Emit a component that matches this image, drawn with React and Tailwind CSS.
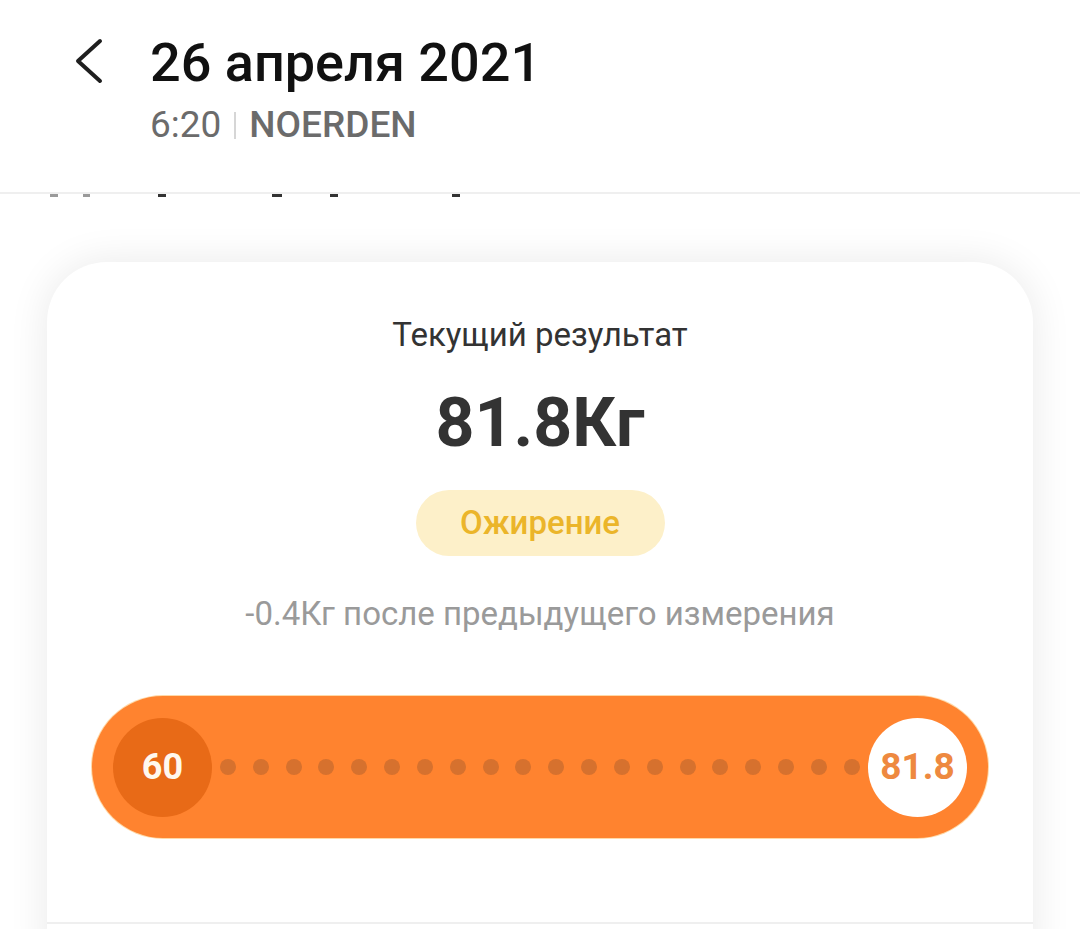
const dots = Array.from({ length: 20 }, (_, i) => i);

// bottoms of the scrolled text that peek out under the header
const peeks = [
  { left: 50, w: 8, c: "bg-[#9a9a9a]" },
  { left: 83, w: 7, c: "bg-[#9a9a9a]" },
  { left: 158, w: 8, c: "bg-[#333]" },
  { left: 272, w: 10, c: "bg-[#333]" },
  { left: 330, w: 8, c: "bg-[#333]" },
  { left: 452, w: 8, c: "bg-[#333]" },
];

export default function App() {
  return (
    <div
      className="min-h-[929px] w-[1080px] overflow-hidden bg-white"
      style={{ fontFamily: "Roboto, 'Noto Sans', sans-serif" }}
    >
      {/* Header */}
      <div className="h-[194px] border-b-2 border-[#efefef]">
        <div className="flex items-start pl-[72px] pt-[31px]">
          <svg
            width="34"
            height="48"
            viewBox="0 0 34 48"
            className="mt-[6px] shrink-0"
          >
            <path
              d="M28 4 L6 24 L28 44"
              fill="none"
              stroke="#1f1f1f"
              strokeWidth="4"
              strokeLinecap="round"
              strokeLinejoin="round"
            />
          </svg>

          <div className="ml-[44px]">
            <h1 className="text-[54px] leading-[64px] font-medium text-[#111]">
              26 апреля 2021
            </h1>
            <div className="mt-[8px] flex items-center text-[37px] leading-[44px] text-[#6b6b6b]">
              <span>6:20</span>
              <span className="mx-[13px] h-[27px] w-[2px] bg-[#d6d6d6]" />
              <span className="font-medium">NOERDEN</span>
            </div>
          </div>
        </div>
      </div>

      {/* Cut-off content under the header */}
      <div className="relative h-[6px]">
        {peeks.map((p) => (
          <span
            key={p.left}
            className={`absolute top-0 h-[3px] ${p.c}`}
            style={{ left: p.left, width: p.w }}
          />
        ))}
      </div>

      {/* Result card */}
      <div className="mx-[47px] mt-[62px] rounded-t-[60px] bg-white pt-[53px] shadow-[0_0_40px_rgba(0,0,0,0.09)]">
        <p className="text-center text-[33px] leading-[40px] text-[#333]">
          Текущий результат
        </p>

        <p className="mt-[28px] text-center text-[68px] leading-[80px] font-bold text-[#333]">
          81.8Кг
        </p>

        <div className="mt-[27px] flex justify-center">
          <div className="flex h-[66px] w-[249px] items-center justify-center rounded-full bg-[#fdf0c9] text-[33px] font-medium text-[#ebb52a]">
            Ожирение
          </div>
        </div>

        <p className="mt-[38px] text-center text-[33px] leading-[40px] text-[#9a9a9a]">
          -0.4Кг после предыдущего измерения
        </p>

        {/* Scale bar */}
        <div className="mx-[45px] mt-[62px] flex h-[142px] items-center rounded-full bg-[#ff832f] px-[21px] ring-1 ring-[#ffd9a8]">
          <div className="flex h-[99px] w-[99px] shrink-0 items-center justify-center rounded-full bg-[#e86a17] text-[36px] font-bold text-[#fff8ee]">
            60
          </div>

          <div className="flex flex-1 items-center justify-between px-[8px]">
            {dots.map((d) => (
              <span
                key={d}
                className="h-[16px] w-[16px] rounded-full bg-[#d6712e]"
              />
            ))}
          </div>

          <div className="flex h-[99px] w-[99px] shrink-0 items-center justify-center rounded-full bg-white text-[37px] font-bold text-[#ee8940]">
            81.8
          </div>
        </div>

        <div className="mt-[84px] h-[2px] bg-[#efefef]" />
        <div className="h-[40px]" />
      </div>
    </div>
  );
}
